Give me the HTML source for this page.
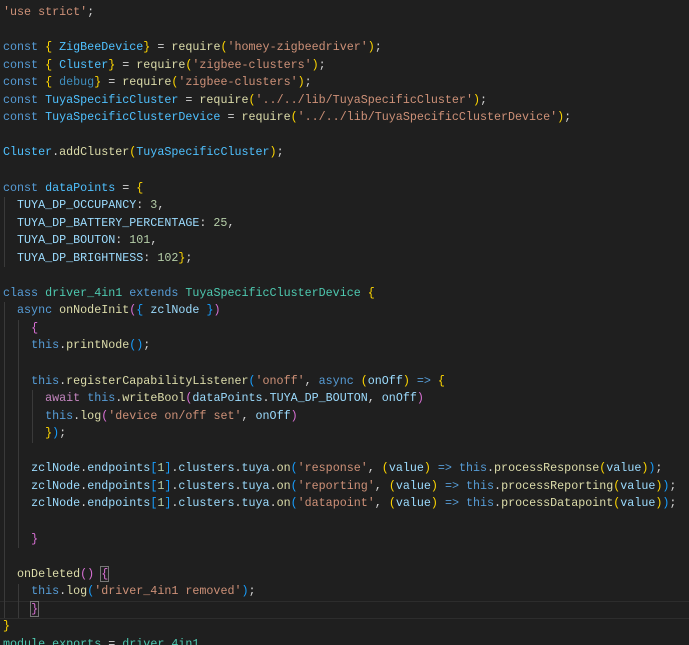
<!DOCTYPE html>
<html><head><meta charset="utf-8"><style>
html,body{margin:0;padding:0;background:#1f1f1f;width:689px;height:645px;overflow:hidden;position:relative}
.l{position:absolute;left:3px;margin:0;white-space:pre;font-family:"Liberation Mono",monospace;font-size:11.7px;line-height:18px;height:18px;color:#d4d4d4}
.k{color:#569cd6}.v{color:#9cdcfe}.c{color:#4fc1ff}.t{color:#4ec9b0}.f{color:#dcdcaa}.s{color:#ce9178}
.y{color:#ffd700}.p{color:#da70d6}.b{color:#179fff}.n{color:#b5cea8}.a{color:#c586c0}.d{color:#3f8fbf}
.cur{position:absolute;left:0;top:601px;width:689px;height:16px;border-top:1px solid #2d2d2d;border-bottom:1px solid #2d2d2d}
.g{position:absolute;width:1px;background:#3a3a3a}
.box{outline:1px solid #777}
</style></head><body>
<div class="cur"></div>
<div class="g" style="left:4px;top:197px;height:70px"></div>
<div class="g" style="left:4px;top:302px;height:316px"></div>
<div class="g" style="left:18px;top:320px;height:228px"></div>
<div class="g" style="left:18px;top:584px;height:34px"></div>
<div class="g" style="left:32px;top:390px;height:53px"></div>
<div class="l" style="top:3px"><span class="s">'use strict'</span>;</div>
<div class="l" style="top:38.1px"><span class="k">const</span> <span class="y">{</span> <span class="c">ZigBeeDevice</span><span class="y">}</span> = <span class="f">require</span><span class="y">(</span><span class="s">'homey-zigbeedriver'</span><span class="y">)</span>;</div>
<div class="l" style="top:55.65px"><span class="k">const</span> <span class="y">{</span> <span class="c">Cluster</span><span class="y">}</span> = <span class="f">require</span><span class="y">(</span><span class="s">'zigbee-clusters'</span><span class="y">)</span>;</div>
<div class="l" style="top:73.2px"><span class="k">const</span> <span class="y">{</span> <span class="d">debug</span><span class="y">}</span> = <span class="f">require</span><span class="y">(</span><span class="s">'zigbee-clusters'</span><span class="y">)</span>;</div>
<div class="l" style="top:90.75px"><span class="k">const</span> <span class="c">TuyaSpecificCluster</span> = <span class="f">require</span><span class="y">(</span><span class="s">'../../lib/TuyaSpecificCluster'</span><span class="y">)</span>;</div>
<div class="l" style="top:108.3px"><span class="k">const</span> <span class="c">TuyaSpecificClusterDevice</span> = <span class="f">require</span><span class="y">(</span><span class="s">'../../lib/TuyaSpecificClusterDevice'</span><span class="y">)</span>;</div>
<div class="l" style="top:143.4px"><span class="c">Cluster</span>.<span class="f">addCluster</span><span class="y">(</span><span class="c">TuyaSpecificCluster</span><span class="y">)</span>;</div>
<div class="l" style="top:178.5px"><span class="k">const</span> <span class="c">dataPoints</span> = <span class="y">{</span></div>
<div class="l" style="top:196.05px">  <span class="v">TUYA_DP_OCCUPANCY</span>: <span class="n">3</span>,</div>
<div class="l" style="top:213.6px">  <span class="v">TUYA_DP_BATTERY_PERCENTAGE</span>: <span class="n">25</span>,</div>
<div class="l" style="top:231.15px">  <span class="v">TUYA_DP_BOUTON</span>: <span class="n">101</span>,</div>
<div class="l" style="top:248.7px">  <span class="v">TUYA_DP_BRIGHTNESS</span>: <span class="n">102</span><span class="y">}</span>;</div>
<div class="l" style="top:283.8px"><span class="k">class</span> <span class="t">driver_4in1</span> <span class="k">extends</span> <span class="t">TuyaSpecificClusterDevice</span> <span class="y">{</span></div>
<div class="l" style="top:301.35px">  <span class="k">async</span> <span class="f">onNodeInit</span><span class="p">(</span><span class="b">{</span> <span class="v">zclNode</span> <span class="b">}</span><span class="p">)</span></div>
<div class="l" style="top:318.9px">    <span class="p">{</span></div>
<div class="l" style="top:336.45px">    <span class="k">this</span>.<span class="f">printNode</span><span class="b">()</span>;</div>
<div class="l" style="top:371.55px">    <span class="k">this</span>.<span class="f">registerCapabilityListener</span><span class="b">(</span><span class="s">'onoff'</span>, <span class="k">async</span> <span class="y">(</span><span class="v">onOff</span><span class="y">)</span> <span class="k">=&gt;</span> <span class="y">{</span></div>
<div class="l" style="top:389.1px">      <span class="a">await</span> <span class="k">this</span>.<span class="f">writeBool</span><span class="p">(</span><span class="v">dataPoints</span>.<span class="v">TUYA_DP_BOUTON</span>, <span class="v">onOff</span><span class="p">)</span></div>
<div class="l" style="top:406.65px">      <span class="k">this</span>.<span class="f">log</span><span class="p">(</span><span class="s">'device on/off set'</span>, <span class="v">onOff</span><span class="p">)</span></div>
<div class="l" style="top:424.2px">      <span class="y">}</span><span class="b">)</span>;</div>
<div class="l" style="top:459.3px">    <span class="v">zclNode</span>.<span class="v">endpoints</span><span class="b">[</span><span class="n">1</span><span class="b">]</span>.<span class="v">clusters</span>.<span class="v">tuya</span>.<span class="f">on</span><span class="b">(</span><span class="s">'response'</span>, <span class="y">(</span><span class="v">value</span><span class="y">)</span> <span class="k">=&gt;</span> <span class="k">this</span>.<span class="f">processResponse</span><span class="y">(</span><span class="v">value</span><span class="y">)</span><span class="b">)</span>;</div>
<div class="l" style="top:476.85px">    <span class="v">zclNode</span>.<span class="v">endpoints</span><span class="b">[</span><span class="n">1</span><span class="b">]</span>.<span class="v">clusters</span>.<span class="v">tuya</span>.<span class="f">on</span><span class="b">(</span><span class="s">'reporting'</span>, <span class="y">(</span><span class="v">value</span><span class="y">)</span> <span class="k">=&gt;</span> <span class="k">this</span>.<span class="f">processReporting</span><span class="y">(</span><span class="v">value</span><span class="y">)</span><span class="b">)</span>;</div>
<div class="l" style="top:494.4px">    <span class="v">zclNode</span>.<span class="v">endpoints</span><span class="b">[</span><span class="n">1</span><span class="b">]</span>.<span class="v">clusters</span>.<span class="v">tuya</span>.<span class="f">on</span><span class="b">(</span><span class="s">'datapoint'</span>, <span class="y">(</span><span class="v">value</span><span class="y">)</span> <span class="k">=&gt;</span> <span class="k">this</span>.<span class="f">processDatapoint</span><span class="y">(</span><span class="v">value</span><span class="y">)</span><span class="b">)</span>;</div>
<div class="l" style="top:529.5px">    <span class="p">}</span></div>
<div class="l" style="top:564.6px">  <span class="f">onDeleted</span><span class="p">()</span> <span class="p box">{</span></div>
<div class="l" style="top:582.15px">    <span class="k">this</span>.<span class="f">log</span><span class="b">(</span><span class="s">'driver_4in1 removed'</span><span class="b">)</span>;</div>
<div class="l" style="top:599.7px">    <span class="p box">}</span></div>
<div class="l" style="top:617.25px"><span class="y">}</span></div>
<div class="l" style="top:634.8px"><span class="t">module</span>.<span class="t">exports</span> = <span class="t">driver_4in1</span></div>
</body></html>
